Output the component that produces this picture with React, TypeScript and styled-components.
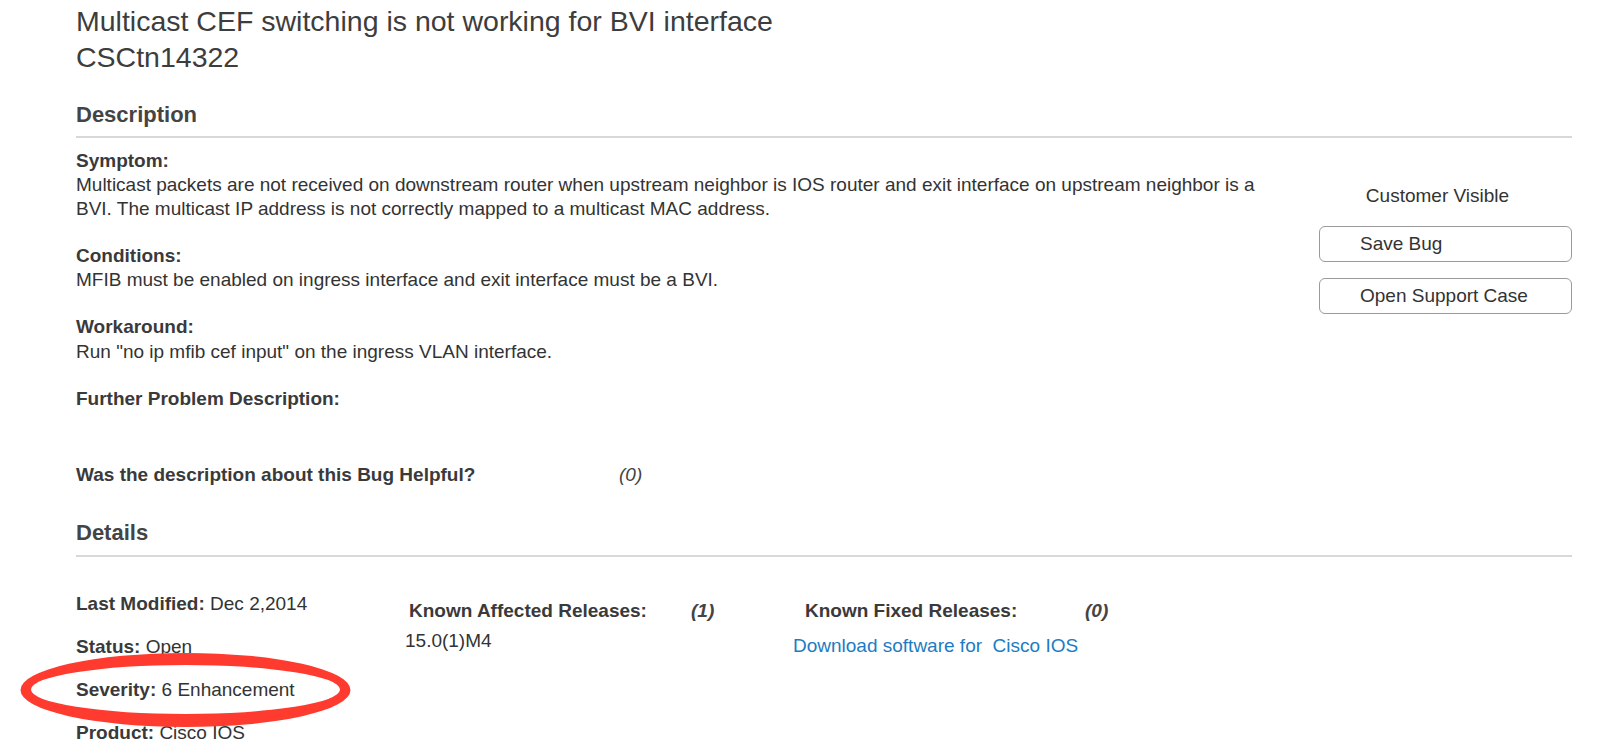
import React from "react";
import styled, { createGlobalStyle } from "styled-components";

const GlobalStyle = createGlobalStyle`
    html, body {
        margin: 0;
        padding: 0;
        background: #fff;
    }
    body {
        font-family: "Liberation Sans", Arial, Helvetica, sans-serif;
        color: #333;
    }
`;

const Page = styled.div`
    position: relative;
    box-sizing: border-box;
    height: 753px;
    overflow: hidden;
    padding: 4px 28px 0 76px;
`;

const Title = styled.h1`
    margin: 0;
    font-size: 28.5px;
    line-height: 35.5px;
    font-weight: normal;
    color: #3d3d3d;
`;

const SectionHeading = styled.h2<{ $top: number; $pad: number }>`
    margin: ${(p) => p.$top}px 0 0;
    padding-bottom: ${(p) => p.$pad}px;
    font-size: 22px;
    line-height: 26px;
    font-weight: bold;
    color: #444;
    border-bottom: 2px solid #d8d8d8;
`;

const DescRow = styled.div`
    display: flex;
    margin-top: 11px;
`;

const DescText = styled.div`
    width: 1200px;
`;

const Block = styled.div`
    & + & {
        margin-top: 23.5px;
    }
`;

const Label = styled.div`
    font-size: 19px;
    line-height: 24.5px;
    font-weight: bold;
    color: #3a3a3a;
`;

const Para = styled.div`
    font-size: 19px;
    line-height: 23.5px;
    color: #333;
`;

const Side = styled.div`
    margin-left: auto;
    width: 253px;
    padding-top: 35px;
    display: flex;
    flex-direction: column;
    gap: 15.5px;
`;

const Visible = styled.div`
    font-size: 19px;
    line-height: 24px;
    text-align: center;
    padding-right: 16px;
    margin-bottom: 3px;
    color: #333;
`;

const Button = styled.button`
    box-sizing: border-box;
    height: 36px;
    padding: 0 0 0 40px;
    text-align: left;
    font-family: inherit;
    font-size: 19px;
    color: #333;
    background: #fff;
    border: 1px solid #9a9a9a;
    border-radius: 6px;
`;

const Helpful = styled.div`
    display: flex;
    margin-top: 52px;
    font-size: 19px;
    line-height: 24.5px;
`;

const HelpfulLabel = styled.span`
    width: 543px;
    font-weight: bold;
    color: #3a3a3a;
`;

const Count = styled.span<{ $strong?: boolean }>`
    font-style: italic;
    font-weight: ${(p) => (p.$strong ? "bold" : "normal")};
    color: #444;
`;

const DetailsGrid = styled.div`
    display: flex;
    margin-top: 35px;
    font-size: 19px;
    line-height: 24px;
`;

const FieldList = styled.div`
    width: 329px;
    display: flex;
    flex-direction: column;
    gap: 19px;
`;

const Field = styled.div`
    color: #333;

    b {
        color: #3a3a3a;
    }
`;

const Releases = styled.div<{ $width?: number }>`
    width: ${(p) => (p.$width ? `${p.$width}px` : "auto")};
    padding-top: 7px;
`;

const ReleaseHead = styled.div<{ $indent: number; $label: number }>`
    display: flex;
    padding-left: ${(p) => p.$indent}px;

    b {
        width: ${(p) => p.$label}px;
        color: #3a3a3a;
    }
`;

const ReleaseValue = styled.div<{ $gap: number }>`
    margin-top: ${(p) => p.$gap}px;
    color: #333;
`;

const DownloadLink = styled.a`
    color: #1b7cc3;
    text-decoration: none;
`;

const Marker = styled.svg`
    position: absolute;
    left: 20px;
    top: 653px;
    pointer-events: none;
`;

const App: React.FC = () => {
    return (
        <>
            <GlobalStyle />
            <Page>
                <Title>
                    Multicast CEF switching is not working for BVI interface
                    <br />
                    CSCtn14322
                </Title>

                <SectionHeading $top={27} $pad={7.5}>
                    Description
                </SectionHeading>
                <DescRow>
                    <DescText>
                        <Block>
                            <Label>Symptom:</Label>
                            <Para>
                                Multicast packets are not received on downstream router when upstream
                                neighbor is IOS router and exit interface on upstream neighbor is a BVI.
                                The multicast IP address is not correctly mapped to a multicast MAC
                                address.
                            </Para>
                        </Block>
                        <Block>
                            <Label>Conditions:</Label>
                            <Para>MFIB must be enabled on ingress interface and exit interface must be a BVI.</Para>
                        </Block>
                        <Block>
                            <Label>Workaround:</Label>
                            <Para>Run "no ip mfib cef input" on the ingress VLAN interface.</Para>
                        </Block>
                        <Block>
                            <Label>Further Problem Description:</Label>
                        </Block>
                    </DescText>
                    <Side>
                        <Visible>Customer Visible</Visible>
                        <Button>Save Bug</Button>
                        <Button>Open Support Case</Button>
                    </Side>
                </DescRow>

                <Helpful>
                    <HelpfulLabel>Was the description about this Bug Helpful?</HelpfulLabel>
                    <Count>(0)</Count>
                </Helpful>

                <SectionHeading $top={32} $pad={9.3}>
                    Details
                </SectionHeading>
                <DetailsGrid>
                    <FieldList>
                        <Field>
                            <b>Last Modified:</b> Dec 2,2014
                        </Field>
                        <Field>
                            <b>Status:</b> Open
                        </Field>
                        <Field>
                            <b>Severity:</b> 6 Enhancement
                        </Field>
                        <Field>
                            <b>Product:</b> Cisco IOS
                        </Field>
                    </FieldList>
                    <Releases $width={388}>
                        <ReleaseHead $indent={4} $label={282}>
                            <b>Known Affected Releases:</b>
                            <Count $strong>(1)</Count>
                        </ReleaseHead>
                        <ReleaseValue $gap={6}>15.0(1)M4</ReleaseValue>
                    </Releases>
                    <Releases>
                        <ReleaseHead $indent={12} $label={280}>
                            <b>Known Fixed Releases:</b>
                            <Count $strong>(0)</Count>
                        </ReleaseHead>
                        <ReleaseValue $gap={11}>
                            <DownloadLink href="#">Download software for&nbsp; Cisco IOS</DownloadLink>
                        </ReleaseValue>
                    </Releases>
                </DetailsGrid>

                <Marker width="331" height="75" viewBox="0 0 331 75">
                    <path
                        fill="#ff3a2f"
                        fillRule="evenodd"
                        d="M0.5,37 A165,37 0 1,0 330.5,37 A165,37 0 1,0 0.5,37 Z M11,36.5 A154.5,24.5 0 1,0 320,36.5 A154.5,24.5 0 1,0 11,36.5 Z"
                    />
                </Marker>
            </Page>
        </>
    );
};

export default App;
